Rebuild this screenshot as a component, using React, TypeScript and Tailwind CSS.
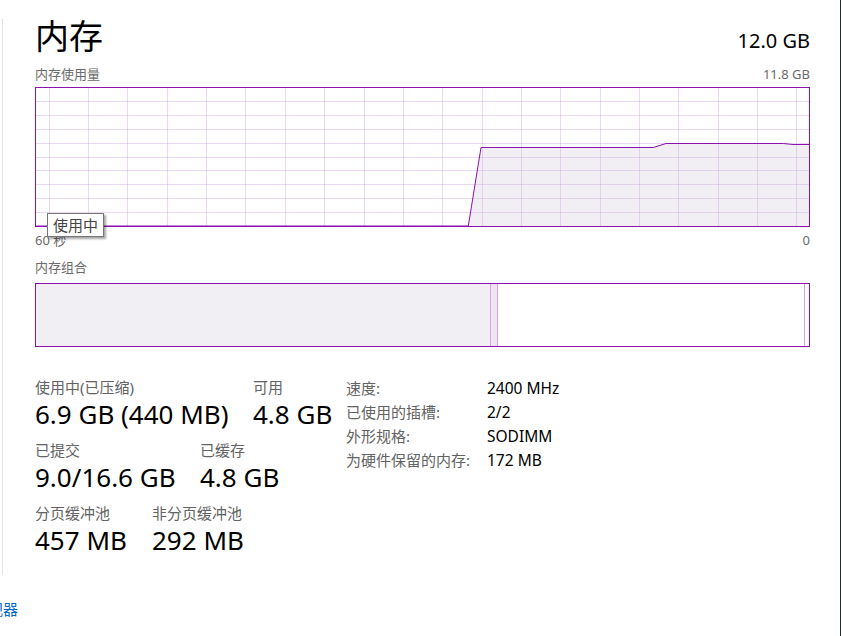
import React from "react";

const W = 775;
const H = 140;

// 内存使用量曲线 (相对图表左上角)
const linePts: [number, number][] = [
  [0, 139],
  [433.3, 139],
  [446, 60.5],
  [618.3, 60.5],
  [631, 56.5],
  [748.3, 56.5],
  [758, 57.5],
  [775, 57.5],
];

function UsageGraph() {
  const hLines = Array.from({ length: 9 }, (_, i) => Math.round((i + 1) * 13.9) + 0.5);
  const vLines = Array.from({ length: 20 }, (_, i) => Math.round(13.7 + i * 39.35) + 0.5);
  const line = linePts.map(([x, y]) => `${x},${y}`).join(" ");
  const fill = `${line} 775,140 0,140`;

  return (
    <div className="relative w-[775px] h-[140px]">
      <svg width={W} height={H} className="block">
        <rect x={0} y={0} width={W} height={H} fill="#ffffff" />
        <polygon points={fill} fill="#f1eff3" />
        {hLines.map((y) => (
          <line key={"h" + y} x1={0} x2={W} y1={y} y2={y} stroke="rgba(200,150,215,0.36)" strokeWidth={1} />
        ))}
        {vLines.map((x) => (
          <line key={"v" + x} x1={x} x2={x} y1={0} y2={H} stroke="rgba(200,150,215,0.36)" strokeWidth={1} />
        ))}
        <polyline points={line} fill="none" stroke="#8b12ae" strokeWidth={1} />
        <rect x={0.5} y={0.5} width={W - 1} height={H - 1} fill="none" stroke="#8b12ae" strokeWidth={1} />
      </svg>
      {/* tooltip */}
      <div className="absolute left-[12px] top-[126px] w-[57px] h-[24px] bg-white border border-[#767676] shadow-[2px_2px_2px_rgba(0,0,0,0.35)] flex items-center justify-center text-[15px] leading-none text-[#444]">
        使用中
      </div>
    </div>
  );
}

function Stat({ label, value, w }: { label: string; value: string; w: string }) {
  return (
    <div className={`${w} shrink-0`}>
      <div className="h-[20px] leading-[20px] text-[15px] text-[#636363] whitespace-nowrap">{label}</div>
      <div className="h-[34px] leading-[34px] text-[26px] text-black whitespace-nowrap">{value}</div>
    </div>
  );
}

const info = [
  ["速度:", "2400 MHz"],
  ["已使用的插槽:", "2/2"],
  ["外形规格:", "SODIMM"],
  ["为硬件保留的内存:", "172 MB"],
];

export default function App() {
  return (
    <div className="w-[841px] h-[636px] bg-white flex flex-col overflow-hidden border-r border-[#1c2e2a] font-['Noto_Sans','Noto_Sans_CJK_SC',sans-serif]">
      <div className="flex h-[599px]">
        {/* 左侧分隔线 */}
        <div className="w-[3px] shrink-0 pt-[19px]">
          <div className="ml-[2px] w-px h-[556px] bg-[#e3e3e3]" />
        </div>

        <div className="w-[807px] pl-[32px] shrink-0">
          {/* 标题 */}
          <div className="flex justify-between items-start pt-[14px]">
            <div className="h-[44px] leading-[44px] text-[34px] text-black">内存</div>
            <div className="mt-[13px] h-[28px] leading-[28px] text-[20px] text-black">12.0 GB</div>
          </div>

          <div className="mt-[8px] h-[16px] leading-[16px] flex justify-between text-[13px] text-[#6b6b6b]">
            <span>内存使用量</span>
            <span>11.8 GB</span>
          </div>

          <div className="mt-[5px]">
            <UsageGraph />
          </div>

          <div className="mt-[5px] h-[16px] leading-[16px] flex justify-between text-[13px] text-[#6b6b6b]">
            <span>60 秒</span>
            <span>0</span>
          </div>

          <div className="mt-[11px] h-[16px] leading-[16px] text-[13px] text-[#6b6b6b]">内存组合</div>

          {/* 内存组合条 */}
          <div className="mt-[8px] h-[64px] border border-[#8b12ae] flex">
            <div className="w-[454px] bg-[#f1eff3]" />
            <div className="w-[8px] bg-[#efe4f1] border-x border-[#d4a8dc]" />
            <div className="w-[307px] bg-white border-r border-[#d4a8dc]" />
            <div className="flex-1 bg-white" />
          </div>

          {/* 统计 */}
          <div className="mt-[29px] flex">
            <div className="w-[311px] shrink-0 flex flex-col gap-[9px] pt-[1px]">
              <div className="flex">
                <Stat label="使用中(已压缩)" value="6.9 GB (440 MB)" w="w-[218px]" />
                <Stat label="可用" value="4.8 GB" w="w-[80px]" />
              </div>
              <div className="flex">
                <Stat label="已提交" value="9.0/16.6 GB" w="w-[165px]" />
                <Stat label="已缓存" value="4.8 GB" w="w-[80px]" />
              </div>
              <div className="flex">
                <Stat label="分页缓冲池" value="457 MB" w="w-[117px]" />
                <Stat label="非分页缓冲池" value="292 MB" w="w-[100px]" />
              </div>
            </div>

            <div className="flex flex-col">
              {info.map(([k, v]) => (
                <div key={k} className="flex h-[24px] leading-[24px] text-[15px]">
                  <span className="w-[141px] shrink-0 text-[#636363] whitespace-nowrap">{k}</span>
                  <span className="text-black whitespace-nowrap text-[15.5px]">{v}</span>
                </div>
              ))}
            </div>
          </div>
        </div>
      </div>

      {/* 底部链接 (被裁切) */}
      <div className="w-[18px] h-[20px] overflow-hidden flex justify-end">
        <span className="shrink-0 whitespace-nowrap text-[15px] leading-[20px] text-[#0066cc]">打开资源监视器</span>
      </div>
    </div>
  );
}
